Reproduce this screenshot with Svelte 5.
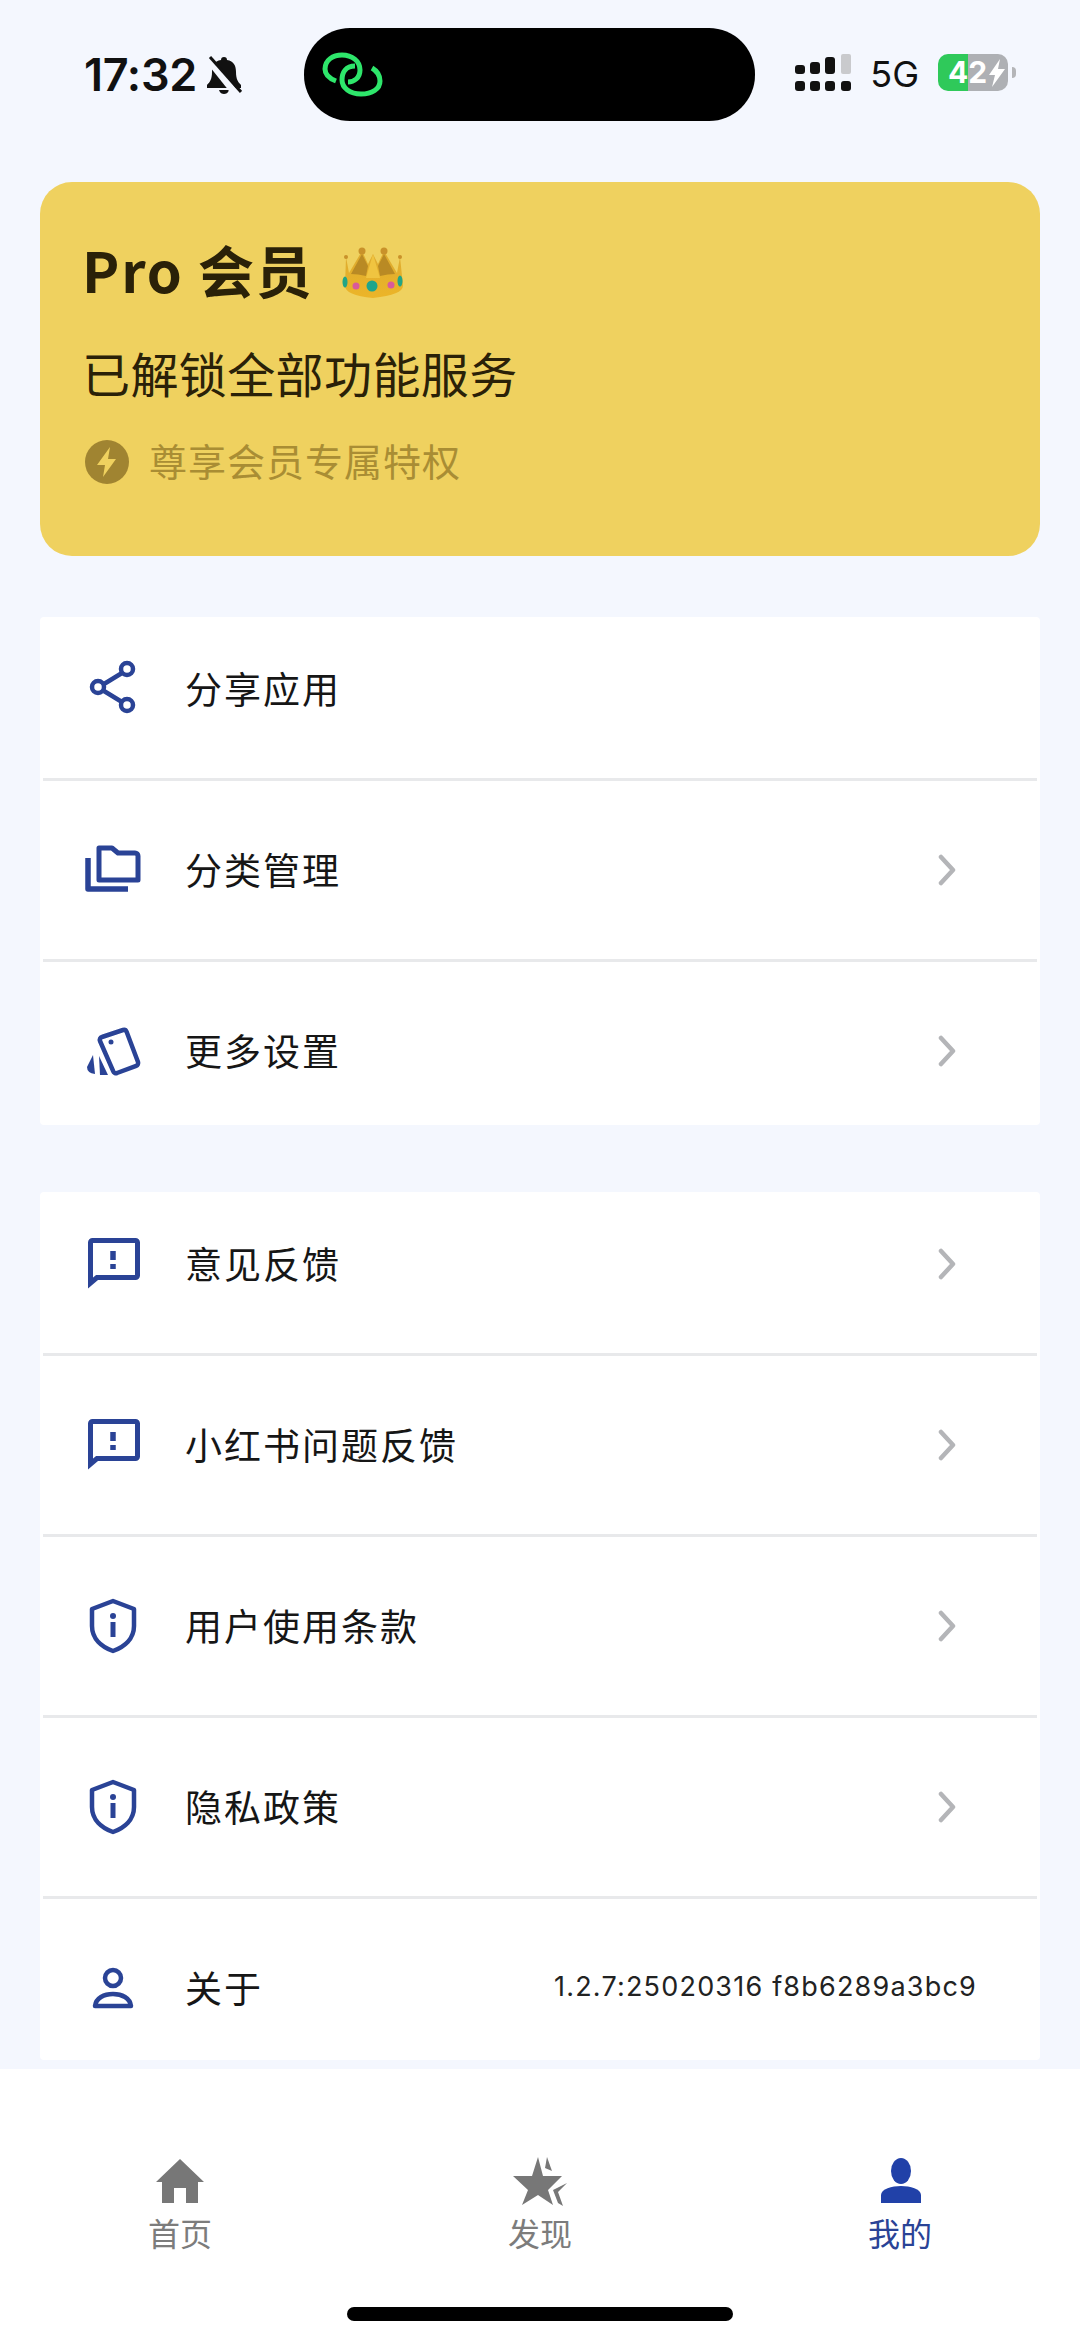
<script>
  const firstGroup = [
    { icon: "share", label: "分享应用", arrow: false },
    { icon: "folder", label: "分类管理", arrow: true },
    { icon: "cards", label: "更多设置", arrow: true },
  ];
  const secondGroup = [
    { icon: "chat", label: "意见反馈", arrow: true },
    { icon: "chat", label: "小红书问题反馈", arrow: true },
    { icon: "shield", label: "用户使用条款", arrow: true },
    { icon: "shield", label: "隐私政策", arrow: true },
    { icon: "person", label: "关于", arrow: false, value: "1.2.7:25020316 f8b6289a3bc9" },
  ];
  const tabs = [
    { icon: "home", label: "首页" },
    { icon: "star", label: "发现" },
    { icon: "me", label: "我的", active: true },
  ];
</script>

{#snippet rowIcon(name)}
  <svg class="row-icon" viewBox="0 0 66 66" fill="none" stroke="#2a4396" stroke-width="4.5">
    {#if name === "share"}
      <path d="M24 28 42 17M24 35 42 46" />
      <circle cx="47" cy="13" r="6" />
      <circle cx="18" cy="31" r="6" />
      <circle cx="47" cy="49" r="6" />
    {:else if name === "folder"}
      <path d="M19 11h13l6 5h17a3 3 0 0 1 3 3v24h-39z" stroke-linejoin="round" stroke-width="5" />
      <path d="M8 21v31h40" stroke-linejoin="round" stroke-width="5.5" />
    {:else if name === "cards"}
      <path d="M22 19 43 12a3 3 0 0 1 3.600 1.800L58 44a3 3 0 0 1-1.800 3.800L37 55a3 3 0 0 1-3.800-1.800L20 23a3 3 0 0 1 2-4z" stroke-linejoin="round" />
      <circle cx="31" cy="24" r="2.500" fill="#2a4396" stroke="none" />
      <path d="M13 37 7 49q0 6 8 7z" fill="#2a4396" stroke="none" />
      <path d="M19 38 20 57h8z" fill="#2a4396" stroke="none" />
    {:else if name === "chat"}
      <path d="M10.500 52V11.500a2 2 0 0 1 2-2h43a2 2 0 0 1 2 2v33a2 2 0 0 1-2 2H17z" stroke-width="5" />
      <path d="M33 20v9M33 33v5" stroke-width="5.500" />
    {:else if name === "shield"}
      <path d="M33 8 54 16V33C54 46 44 54 33 58 22 54 12 46 12 33V16z" stroke-linejoin="round" />
      <circle cx="33" cy="23" r="3" fill="#2a4396" stroke="none" />
      <path d="M33 29v15" stroke-width="5" />
    {:else if name === "person"}
      <circle cx="33" cy="23" r="8" />
      <path d="M15 51C16 43 24 39 33 39S50 43 51 51z" stroke-linejoin="round" />
    {/if}
  </svg>
{/snippet}

{#snippet row(item)}
  <div class="row">
    {@render rowIcon(item.icon)}
    <span class="row-label">{item.label}</span>
    {#if item.value}
      <span class="row-value">{item.value}</span>
    {/if}
    {#if item.arrow}
      <svg class="chevron" viewBox="0 0 20 32" fill="none" stroke="#b4b5b8" stroke-width="4.5">
        <path d="M4 3 16 16 4 29" stroke-linecap="round" stroke-linejoin="round" />
      </svg>
    {/if}
  </div>
{/snippet}

<div class="page">
  <header class="status">
    <div class="status-left">
      <span class="time">17:32</span>
      <svg class="bell" viewBox="0 0 36 38">
        <path d="M18 1c2 0 3 1 3 3 7 1 9 6 9 12 0 7 2 10 5 13v3H1v-3c3-3 5-6 5-13 0-6 2-11 9-12 0-2 1-3 3-3zM13 34h10c-1 3-3 4-5 4s-4-1-5-4z" fill="#111" />
        <path d="M2 3 30 38" stroke="#f4f7fe" stroke-width="7" />
        <path d="M4 1 35 36" stroke="#111" stroke-width="3" />
      </svg>
    </div>
    <div class="island">
      <svg class="link" viewBox="0 0 90 70" fill="none" stroke="#2ee66b" stroke-width="5">
        <path d="M26 41C18 38 15 34 15 29 15 20 23 15 32 15 42 15 50 21 50 30 50 38 44 42 38 42" />
        <path d="M45 26C36 26 32 32 32 40 32 48 40 54 51 54 62 54 70 49 70 41 70 36 67 31 62 28" />
      </svg>
    </div>
    <div class="status-right">
      <svg class="signal" viewBox="0 0 56 37">
        <rect x="0" y="11" width="10" height="9" rx="3" />
        <rect x="15" y="8" width="10" height="12" rx="3" />
        <rect x="30" y="3" width="10" height="17" rx="3" />
        <rect x="46" y="0" width="10" height="20" rx="2" fill="#c9cacd" />
        <rect x="0" y="27" width="10" height="10" rx="3" />
        <rect x="15" y="27" width="10" height="10" rx="3" />
        <rect x="30" y="27" width="10" height="10" rx="3" />
        <rect x="46" y="27" width="10" height="10" rx="3" />
      </svg>
      <span class="net">5G</span>
      <div class="battery">
        <div class="battery-body">
          <span>42</span>
          <svg viewBox="0 0 18 28" class="bolt"><path d="M12 0 1 16h6L4 28 17 10H10z" fill="#fff" /></svg>
        </div>
        <div class="battery-nub"></div>
      </div>
    </div>
  </header>

  <main class="content">
    <section class="pro-card">
      <div class="pro-title">
        <span>Pro 会员</span>
        <svg class="crown" viewBox="20 0 66 60">
          <defs>
            <linearGradient id="gold" x1="0" y1="0" x2="0" y2="1">
              <stop offset="0" stop-color="#dcaa30" />
              <stop offset="1" stop-color="#ecb528" />
            </linearGradient>
          </defs>
          <path d="M26 17 29 33 42 11 48 24 53 14 58 24 64 11 77 33 80 17 83 45Q84 55 53 58 24 55 25 45z" fill="url(#gold)" />
          <path d="M31 34 42 14 48 26 46 36Q38 34 31 34z" fill="#b98a24" />
          <path d="M75 34 64 14 58 26 60 36Q68 34 75 34z" fill="#b98a24" />
          <path d="M53 14 60 38H46z" fill="#f0c440" />
          <circle cx="26" cy="17" r="2" fill="#c9922a" />
          <circle cx="80" cy="17" r="2" fill="#c9922a" />
          <circle cx="42" cy="11" r="3.500" fill="#c9922a" />
          <circle cx="64" cy="11" r="3.500" fill="#c9922a" />
          <ellipse cx="25" cy="42" rx="2.500" ry="5.500" fill="#22a585" />
          <ellipse cx="80" cy="41" rx="2.500" ry="5.500" fill="#22a585" />
          <circle cx="36" cy="46" r="3.500" fill="#d95a9b" />
          <circle cx="71" cy="45" r="3.500" fill="#d95a9b" />
          <circle cx="52" cy="46" r="5.500" fill="#1fa58c" />
        </svg>
      </div>
      <div class="pro-sub">已解锁全部功能服务</div>
      <div class="pro-hint">
        <svg class="hint-icon" viewBox="0 0 44 44">
          <circle cx="22" cy="22" r="22" fill="#a08431" />
          <path d="M25 7 12 25h8l-2 12 13-18h-8z" fill="#efd15f" />
        </svg>
        <span>尊享会员专属特权</span>
      </div>
    </section>

    <section class="group first">
      {#each firstGroup as item}
        {@render row(item)}
      {/each}
    </section>

    <section class="group">
      {#each secondGroup as item}
        {@render row(item)}
      {/each}
    </section>
  </main>

  <nav class="tabs">
    {#each tabs as tab}
      <div class="tab" class:active={tab.active}>
        <svg class="tab-icon" viewBox="0 0 60 52" fill={tab.active ? "#2141a8" : "#777"}>
          {#if tab.icon === "home"}
            <path d="M30 2 54 25H48V46H36V31H24V46H12V25H6z" />
          {:else if tab.icon === "star"}
            <path d="M28 0 33 19H52L38 33 43 48 28 38 12 48 18 33 3 19H22z" />
            <path d="M37 0 42 14 35 11z" />
            <path d="M43 33 57 26 48 35 53 49 48 46z" />
          {:else}
            <ellipse cx="31" cy="14" rx="10" ry="13" />
            <path d="M11 46V38C11 32 22 29 31 29S51 32 51 38V46z" />
          {/if}
        </svg>
        <span>{tab.label}</span>
      </div>
    {/each}
    <div class="home-bar"></div>
  </nav>
</div>

<style>
  :global(body) {
    background: #f4f7fe;
  }
  .page {
    width: 1080px;
    height: 2341px;
    display: flex;
    flex-direction: column;
    background: #f4f7fe;
    font-family: "Noto Sans CJK SC", "Noto Sans", sans-serif;
    overflow: hidden;
  }

  .status {
    height: 182px;
    flex: none;
    box-sizing: border-box;
    padding: 28px 64px 0 84px;
    display: flex;
    align-items: flex-start;
  }
  .status-left {
    display: flex;
    align-items: center;
    width: 220px;
    height: 93px;
    gap: 9px;
  }
  .time {
    font-family: Inter, sans-serif;
    font-weight: 600;
    font-size: 45px;
    letter-spacing: -0.3px;
    color: #111;
    margin-top: -1px;
  }
  .bell {
    width: 36px;
    height: 38px;
  }
  .island {
    width: 452px;
    height: 93px;
    background: #000;
    border-radius: 46px;
    display: flex;
    align-items: center;
    padding-left: 6px;
    box-sizing: border-box;
  }
  .link {
    width: 90px;
    height: 70px;
  }
  .status-right {
    display: flex;
    align-items: center;
    height: 93px;
    margin-left: 40px;
    gap: 19px;
  }
  .signal {
    width: 56px;
    height: 37px;
    fill: #111;
    margin-top: -4px;
  }
  .net {
    font-family: Inter, sans-serif;
    font-size: 36px;
    font-weight: 400;
    color: #111;
    margin-top: -1px;
  }
  .battery {
    display: flex;
    align-items: center;
    gap: 4px;
    margin-top: -4px;
  }
  .battery-body {
    width: 70px;
    height: 37px;
    border-radius: 10px;
    background: linear-gradient(90deg, #2fc95a 43%, #aeb0b4 43%);
    display: flex;
    align-items: center;
    box-sizing: border-box;
    padding-left: 10px;
    gap: 1px;
    color: #fff;
    font-family: Inter, sans-serif;
    font-weight: 700;
    font-size: 30px;
    line-height: 37px;
  }
  .bolt {
    width: 18px;
    height: 28px;
  }
  .battery-nub {
    width: 4px;
    height: 11px;
    background: #b4b5b8;
    border-radius: 0 4px 4px 0;
  }

  .content {
    flex: 1;
    min-height: 0;
    padding: 0 40px;
    display: flex;
    flex-direction: column;
  }

  .pro-card {
    height: 374px;
    flex: none;
    box-sizing: border-box;
    padding: 47px 42px 0;
    background: #efd15f;
    border-radius: 32px;
    margin-bottom: 61px;
  }
  .pro-title {
    display: flex;
    align-items: center;
    height: 78px;
    gap: 26px;
    font-size: 56px;
    font-weight: 700;
    letter-spacing: 1.8px;
    color: #2a2108;
  }
  .crown {
    width: 66px;
    height: 60px;
    margin-top: 4px;
  }
  .pro-sub {
    margin-top: 32px;
    font-size: 48px;
    line-height: 66px;
    letter-spacing: 0.4px;
    color: #2a2108;
  }
  .pro-hint {
    display: flex;
    align-items: center;
    margin-top: 31px;
    gap: 20px;
    color: #a98d34;
    font-size: 38px;
    letter-spacing: 1px;
    line-height: 48px;
  }
  .hint-icon {
    width: 44px;
    height: 44px;
    margin-left: 3px;
    margin-top: 4px;
  }

  .group {
    flex: none;
    background: #fff;
    overflow: hidden;
    border-radius: 4px;
  }
  .group.first {
    margin-bottom: 67px;
  }
  .group.first .row:last-child {
    margin-bottom: -15px;
  }
  .row {
    height: 178px;
    display: flex;
    align-items: center;
    padding: 0 65px 0 40px;
    margin: 0 3px 0 3px;
    border-bottom: 3px solid #e8e9eb;
  }
  .row:first-child {
    margin-top: -17px;
  }
  .row:last-child {
    border-bottom: none;
    margin-bottom: -17px;
  }
  .row-icon {
    width: 66px;
    height: 66px;
    flex: none;
    margin-left: -3px;
  }
  .row-label {
    margin-left: 39px;
    margin-top: -2px;
    flex: 1;
    font-size: 37px;
    letter-spacing: 2px;
    color: #161616;
  }
  .row-value {
    font-family: Inter, sans-serif;
    font-size: 27px;
    letter-spacing: 1.2px;
    color: #222;
    margin-right: -5px;
    margin-top: -3px;
  }
  .chevron {
    width: 20px;
    height: 32px;
    margin-right: 15px;
  }

  .tabs {
    height: 272px;
    flex: none;
    background: #fff;
    display: grid;
    grid-template-columns: 360px 360px 360px;
    grid-template-rows: 1fr 14px;
    padding-bottom: 20px;
    box-sizing: border-box;
  }
  .tab {
    display: flex;
    flex-direction: column;
    align-items: center;
    padding-top: 88px;
    color: #7c7c7c;
    font-size: 32px;
    line-height: 46px;
  }
  .tab.active {
    color: #2a4396;
  }
  .tab-icon {
    width: 60px;
    height: 52px;
    flex: none;
  }
  .home-bar {
    grid-column: 1 / 4;
    justify-self: center;
    width: 386px;
    height: 14px;
    background: #000;
    border-radius: 7px;
  }
</style>
